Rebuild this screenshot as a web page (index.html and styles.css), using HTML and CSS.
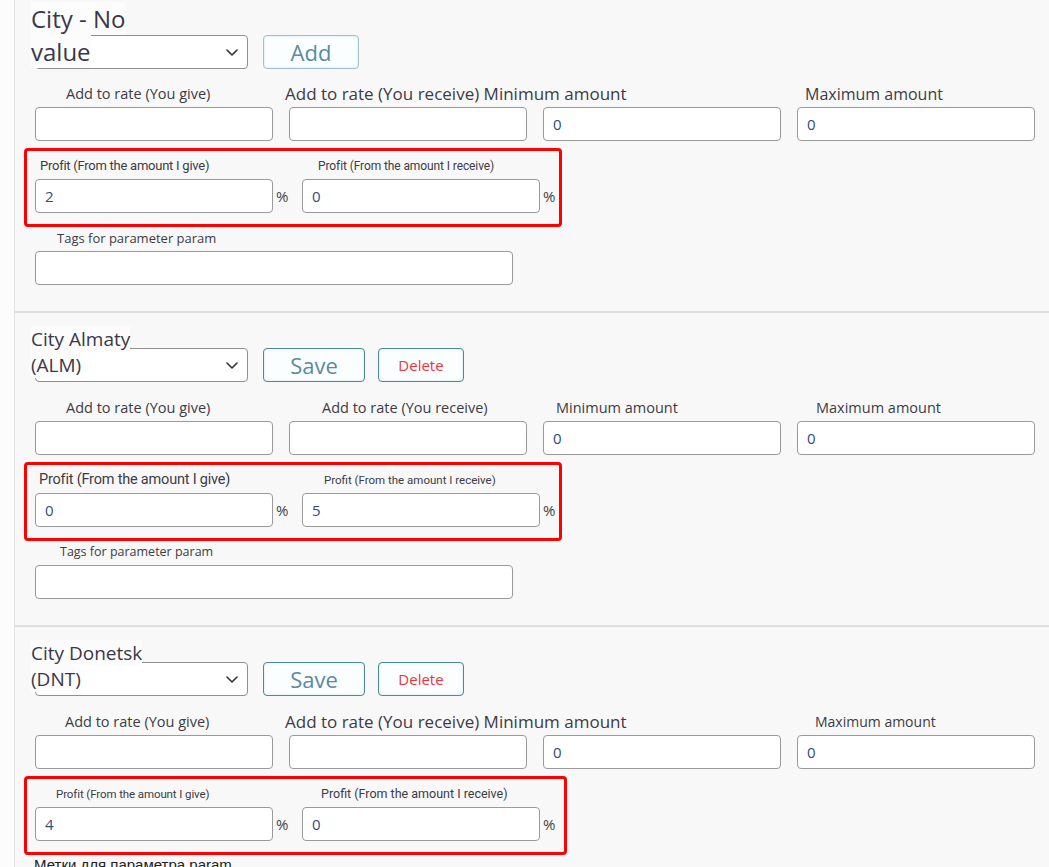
FILE: index.html
```html
<!DOCTYPE html>
<html lang="en">
<head>
<meta charset="utf-8">
<title>Cities</title>
<link rel="stylesheet" href="styles.css">
</head>
<body>
<div class="page">
  <div class="rail"></div>
  <main class="content">
    <section class="city">
      <div class="head">
        <div class="select">
          <span class="select-text big"><span class="st">City - No value</span></span>
          <svg class="chev" viewBox="0 0 12 7"><path d="M1 1 L6 6 L11 1" fill="none" stroke="#333" stroke-width="1.6" stroke-linecap="round" stroke-linejoin="round"/></svg>
        </div>
        <button class="btn btn-add">Add</button>
      </div>
      <div class="grid4">
        <div class="field"><div class="lbl off-a">Add to rate (You give)</div><div class="input"></div></div>
        <div class="field"><div class="lbl lbl-big off-m">Add to rate (You receive) Minimum amount</div><div class="input"></div></div>
        <div class="field"><div class="lbl"></div><div class="input">0</div></div>
        <div class="field"><div class="lbl lbl-max off-c">Maximum amount</div><div class="input">0</div></div>
      </div>
      <div class="profit">
        <div class="pf">
          <div class="plbl p1">Profit (From the amount I give)</div>
          <div class="prow"><div class="input">2</div><span class="pct">%</span></div>
        </div>
        <div class="pf">
          <div class="plbl p2">Profit (From the amount I receive)</div>
          <div class="prow"><div class="input">0</div><span class="pct">%</span></div>
        </div>
      </div>
      <div class="tags">
        <div class="tlbl t1">Tags for parameter param</div>
        <div class="input wide"></div>
      </div>
    </section>

    <section class="city">
      <div class="head">
        <div class="select">
          <span class="select-text"><span class="st">City Almaty (ALM)</span></span>
          <svg class="chev" viewBox="0 0 12 7"><path d="M1 1 L6 6 L11 1" fill="none" stroke="#333" stroke-width="1.6" stroke-linecap="round" stroke-linejoin="round"/></svg>
        </div>
        <button class="btn btn-save">Save</button>
        <button class="btn btn-del">Delete</button>
      </div>
      <div class="grid4 lower">
        <div class="field"><div class="lbl off-a">Add to rate (You give)</div><div class="input"></div></div>
        <div class="field"><div class="lbl off-b">Add to rate (You receive)</div><div class="input"></div></div>
        <div class="field"><div class="lbl off-d">Minimum amount</div><div class="input">0</div></div>
        <div class="field"><div class="lbl off-e">Maximum amount</div><div class="input">0</div></div>
      </div>
      <div class="profit">
        <div class="pf">
          <div class="plbl p3">Profit (From the amount I give)</div>
          <div class="prow"><div class="input">0</div><span class="pct">%</span></div>
        </div>
        <div class="pf">
          <div class="plbl p4">Profit (From the amount I receive)</div>
          <div class="prow"><div class="input">5</div><span class="pct">%</span></div>
        </div>
      </div>
      <div class="tags">
        <div class="tlbl t2">Tags for parameter param</div>
        <div class="input wide"></div>
      </div>
    </section>

    <section class="city last">
      <div class="head">
        <div class="select">
          <span class="select-text"><span class="st">City Donetsk (DNT)</span></span>
          <svg class="chev" viewBox="0 0 12 7"><path d="M1 1 L6 6 L11 1" fill="none" stroke="#333" stroke-width="1.6" stroke-linecap="round" stroke-linejoin="round"/></svg>
        </div>
        <button class="btn btn-save">Save</button>
        <button class="btn btn-del">Delete</button>
      </div>
      <div class="grid4 lower">
        <div class="field"><div class="lbl off-a2">Add to rate (You give)</div><div class="input"></div></div>
        <div class="field"><div class="lbl lbl-big off-m">Add to rate (You receive) Minimum amount</div><div class="input"></div></div>
        <div class="field"><div class="lbl"></div><div class="input">0</div></div>
        <div class="field"><div class="lbl off-f">Maximum amount</div><div class="input">0</div></div>
      </div>
      <div class="profit wider">
        <div class="pf">
          <div class="plbl p5">Profit (From the amount I give)</div>
          <div class="prow"><div class="input">4</div><span class="pct">%</span></div>
        </div>
        <div class="pf">
          <div class="plbl p6">Profit (From the amount I receive)</div>
          <div class="prow"><div class="input">0</div><span class="pct">%</span></div>
        </div>
      </div>
      <div class="metki">Метки для параметра param</div>
    </section>
  </main>
</div>
</body>
</html>
```

FILE: styles.css
```css
html, body {
  margin: 0;
  height: 100%;
}
body {
  font-family: "Open Sans", "Noto Sans", sans-serif;
  background: #f8f8f8;
  overflow: hidden;
}
.page {
  display: flex;
  min-height: 100%;
}
.rail {
  flex: none;
  width: 14px;
  background: #fcfcfc;
  border-right: 1px solid #e4e4e4;
}
.content {
  flex: 1;
  min-width: 0;
}
.city {
  padding: 35px 0 26px 20px;
  border-bottom: 2px solid #dedede;
}
.city.last {
  border-bottom: none;
  padding-bottom: 0;
}

/* head: select + buttons */
.head {
  display: flex;
  align-items: flex-start;
  gap: 15px;
}
.select {
  flex: none;
  width: 213px;
  height: 34px;
  box-sizing: border-box;
  border: 1px solid #8f8f8f;
  border-radius: 4px;
  background: #fff;
  display: flex;
  align-items: flex-end;
  padding-right: 9px;
}
.select-text {
  flex: none;
  width: 120px;
  margin-left: -5px;
  color: #3b3748;
  font-size: 19px;
  line-height: 26px;
  padding-bottom: 3px;
}
.select-text.big {
  font-size: 24px;
  line-height: 33px;
  padding-bottom: 0;
}
.st {
  background: #fcfcfc;
}
.chev {
  margin-left: auto;
  align-self: center;
  width: 12px;
  height: 7px;
}
.btn {
  flex: none;
  height: 34px;
  box-sizing: border-box;
  border: 1px solid #4f8795;
  border-radius: 4px;
  background: #fbfeff;
  font-family: inherit;
  padding: 0;
  color: #5b8aa2;
  font-size: 22px;
  line-height: 30px;
  box-shadow: inset 0 0 3px rgba(120, 190, 205, 0.35);
}
.btn-add {
  width: 96px;
  border-color: #a3c0c8;
}
.btn-save {
  width: 102px;
}
.btn-del {
  width: 86px;
  margin-left: -2px;
  font-size: 15px;
  color: #f0323c;
}

/* 4-column row */
.grid4 {
  display: grid;
  grid-template-columns: repeat(4, 238px);
  column-gap: 16px;
  margin-top: 15px;
}
.grid4.lower {
  margin-top: 16px;
}
.field {
  min-width: 0;
}
.lbl {
  height: 20px;
  line-height: 20px;
  margin-bottom: 3px;
  font-size: 14.5px;
  white-space: nowrap;
  color: #3d3b45;
}
.lbl-big {
  font-size: 17px;
}
.lbl-max {
  font-size: 16px;
}
.off-a { padding-left: 31px; }
.off-a2 { padding-left: 30px; }
.off-m { margin-left: -4px; }
.off-b { padding-left: 33px; }
.off-c { padding-left: 8px; }
.off-d { padding-left: 13px; }
.off-e { padding-left: 19px; }
.off-f { padding-left: 18px; font-size: 14px; }

.input {
  height: 34px;
  box-sizing: border-box;
  border: 1px solid #9a9a9a;
  border-radius: 4px;
  background: #fff;
  padding-left: 9px;
  font-size: 15px;
  line-height: 32px;
  color: #2d4d7c;
}

/* profit box */
.profit {
  display: flex;
  width: fit-content;
  gap: 14px;
  margin: 7px 0 0 -11px;
  border: 3px solid #f00;
  border-radius: 4px;
  padding: 6px 4px 11px 8px;
}
.profit.wider {
  padding-right: 9px;
}
.pf {
  display: flex;
  flex-direction: column;
}
.plbl {
  height: 18px;
  line-height: 18px;
  margin-bottom: 4px;
  white-space: nowrap;
  font-family: Roboto, "Open Sans", sans-serif;
  color: #3d3b45;
}
.p1 { padding-left: 5px; font-size: 13px; letter-spacing: -0.25px; }
.p2 { padding-left: 16px; font-size: 12px; letter-spacing: -0.1px; }
.p3 { padding-left: 4px; font-size: 14.5px; letter-spacing: -0.2px; }
.p4 { padding-left: 22px; font-size: 11.5px; }
.p5 { padding-left: 21px; font-size: 11.5px; letter-spacing: -0.1px; }
.p6 { padding-left: 19px; font-size: 12.5px; }

.prow {
  display: flex;
  align-items: center;
}
.prow .input {
  width: 238px;
}
.pct {
  width: 12px;
  margin-left: 3px;
  font-size: 15px;
  color: #444;
}

/* tags */
.tags {
  margin-top: 2px;
}
.tlbl {
  height: 18px;
  line-height: 18px;
  margin-bottom: 4px;
  font-size: 13px;
  color: #3d3b45;
  white-space: nowrap;
}
.t1 { padding-left: 22px; }
.t2 { padding-left: 25px; font-size: 12.5px; }
.input.wide {
  width: 478px;
}
.metki {
  margin: 1px 0 0 -1px;
  font-family: "Liberation Sans", Arial, sans-serif;
  font-size: 15px;
  line-height: 18px;
  color: #222;
}
```
